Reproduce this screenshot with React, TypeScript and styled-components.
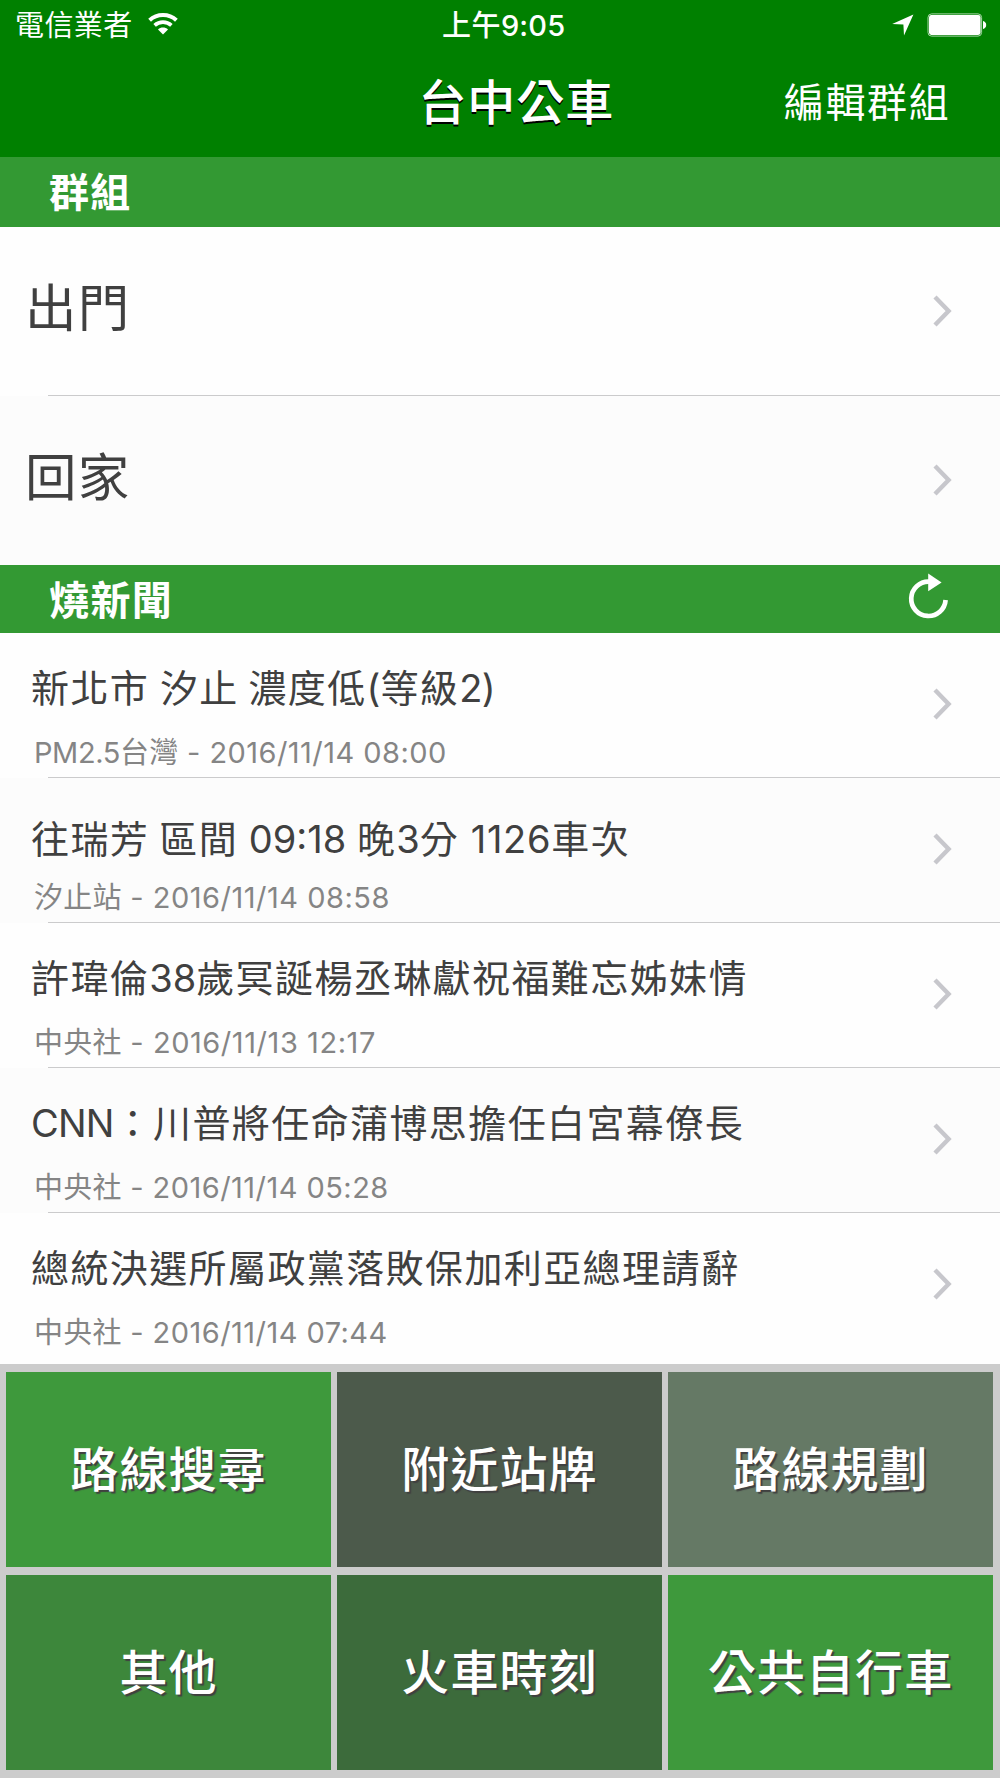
import React from "react";
import styled, { createGlobalStyle } from "styled-components";

const GlobalStyle = createGlobalStyle`
  body {
    margin: 0;
    background: #fff;
    font-family: Inter, "Noto Sans CJK TC", sans-serif;
  }
  * { box-sizing: border-box; }
`;

const Screen = styled.div`
  display: flex;
  flex-direction: column;
  width: 1000px;
  height: 1778px;
  overflow: hidden;
`;

const TopBar = styled.header`
  flex: none;
  height: 157px;
  background: #008000;
  color: #fff;
`;

const StatusBar = styled.div`
  display: grid;
  grid-template-columns: 1fr auto 1fr;
  align-items: center;
  height: 51px;
  padding: 0 13.5px 0 15px;
  font-size: 29px;
  line-height: 50px;
`;

const StatusLeft = styled.div`
  display: flex;
  align-items: center;
  gap: 15px;
  svg { margin-top: -3px; }
`;

const Clock = styled.div`
  padding-left: 6px;
  font-weight: 500;
`;

const StatusRight = styled.div`
  display: flex;
  align-items: center;
  justify-content: flex-end;
  gap: 13px;
  svg { margin-top: -1px; }
`;

const NavBar = styled.nav`
  display: grid;
  grid-template-columns: 1fr auto 1fr;
  align-items: center;
  height: 103px;
  padding: 0 49.5px 0 82px;
`;

const NavTitle = styled.h1`
  grid-column: 2;
  margin: 0;
  font-size: 48px;
  line-height: 60px;
  font-weight: 500;
  text-shadow: 0 2px 0 #000;
`;

const NavAction = styled.a`
  justify-self: end;
  font-size: 40px;
  line-height: 60px;
`;

const SectionHeader = styled.div<{ $height: number; $drop: number }>`
  flex: none;
  display: flex;
  align-items: center;
  justify-content: space-between;
  height: ${(p) => p.$height}px;
  padding: ${(p) => p.$drop}px 51px 0 49px;
  background: #339933;
  color: #fff;
  font-size: 40px;
  line-height: 64px;
  font-weight: 700;
  svg { margin-top: -8px; }
`;

const Row = styled.div<{ $alt?: boolean; $height: number; $line?: boolean }>`
  flex: none;
  display: flex;
  justify-content: space-between;
  height: ${(p) => p.$height}px;
  padding-right: 48.5px;
  background: ${(p) => (p.$alt ? "#fcfcfc" : "#fefefe")};
  background-image: ${(p) =>
    p.$line ? "linear-gradient(#cbcbcc, #cbcbcc)" : "none"};
  background-size: 952px 1px;
  background-position: right bottom;
  background-repeat: no-repeat;
`;

const Disclosure = styled.span<{ $height: number }>`
  display: flex;
  align-items: center;
  height: ${(p) => p.$height}px;
`;

const GroupName = styled.div`
  padding-left: 25px;
  font-size: 51.5px;
  line-height: 163px;
  color: #404040;
`;

const NewsText = styled.div<{ $low?: boolean }>`
  display: flex;
  flex-direction: column;
  padding-top: ${(p) => (p.$low ? 37 : 31)}px;
  gap: ${(p) => (p.$low ? 16 : 22)}px;
`;

const NewsTitle = styled.div`
  padding-left: 31px;
  font-size: 38px;
  line-height: 48px;
  color: #404040;
  white-space: pre;
`;

const NewsMeta = styled.div`
  padding-left: 34px;
  font-size: 29px;
  line-height: 38px;
  color: #858585;
  white-space: pre;
`;

const Run = styled.span<{ $tracking: number }>`
  letter-spacing: ${(p) => p.$tracking}px;
`;

const Tiles = styled.div`
  flex: 1;
  display: grid;
  grid-template-columns: repeat(3, 325px);
  grid-template-rows: repeat(2, 195px);
  gap: 8px 6px;
  padding: 8px 7px 8px 6px;
  background: #ccc;
`;

const Tile = styled.button<{ $color: string }>`
  border: 0;
  padding: 0;
  background: ${(p) => p.$color};
  color: #fff;
  font-family: inherit;
  font-size: 48px;
  line-height: 60px;
  font-weight: 500;
  text-shadow: 2px 2px 1px #404040;
`;

/* Splits a string into Latin and Han runs so each keeps its own tracking. */
function Label({ text, han = 0, latin = [] }: { text: string; han?: number; latin?: number[] }) {
  const runs = text.match(/[\x20-\x7e]+|[^\x20-\x7e]+/g) ?? [];
  let n = 0;
  return (
    <>
      {runs.map((run, i) => (
        <Run key={i} $tracking={run.charCodeAt(0) < 127 ? latin[n++] ?? 0 : han}>
          {run}
        </Run>
      ))}
    </>
  );
}

const Chevron = () => (
  <svg width="19" height="32" viewBox="0 0 19 32" fill="none">
    <path d="M2 2L15.6 16L2 30" stroke="#c7c7cc" strokeWidth="4.4" />
  </svg>
);

const Refresh = () => (
  <svg width="41" height="48" viewBox="0 0 41 48">
    <path d="M21 8.6A17.2 17.2 0 1 0 37.6 27" fill="none" stroke="#fff" strokeWidth="4.7" />
    <path d="M20.2 0.5L33.6 9.6L20.2 18.2Z" fill="#fff" />
  </svg>
);

const Wifi = () => (
  <svg width="30" height="22" viewBox="0 0 30 22" fill="none" stroke="#fff">
    <path d="M1.6 7.2C9 .3 21 .3 28.4 7.2" strokeWidth="4" />
    <path d="M6.6 12.3C11.4 8 18.6 8 23.4 12.3" strokeWidth="3.7" />
    <path d="M10 16.4C12.8 13.9 17.2 13.9 20 16.4L15 21.6Z" fill="#fff" stroke="none" />
  </svg>
);

const Location = () => (
  <svg width="22" height="22" viewBox="0 0 22 22">
    <path d="M21.4 .4L12 21.6L11.4 10.6L.2 10Z" fill="#fff" />
  </svg>
);

const Battery = () => (
  <svg width="60" height="24" viewBox="0 0 60 24">
    <rect x="1" y=".9" width="53.6" height="22.2" rx="3.6" fill="none" stroke="#a8d6a8" strokeWidth="1" />
    <rect x="2" y="2" width="51.6" height="20" rx="2.4" fill="#fff" />
    <path d="M56 8C58 8.4 59.2 10 59.2 12S58 15.6 56 16Z" fill="#fff" />
  </svg>
);

const groups = ["出門", "回家"];

const news = [
  {
    title: "新北市 汐止 濃度低(等級2)",
    tracking: [0, -1, 0, -0.8],
    meta: "PM2.5台灣 - 2016/11/14 08:00",
    metaTracking: [-0.4, 0.45],
  },
  {
    title: "往瑞芳 區間 09:18 晚3分 1126車次",
    tracking: [-0.6, 0, 0, 0.75],
    meta: "汐止站 - 2016/11/14 08:58",
    metaTracking: [0.5],
    low: true,
  },
  {
    title: "許瑋倫38歲冥誕楊丞琳獻祝福難忘姊妹情",
    tracking: [0],
    meta: "中央社 - 2016/11/13 12:17",
    metaTracking: [0.55],
  },
  {
    title: "CNN：川普將任命蒲博思擔任白宮幕僚長",
    tracking: [-0.8],
    meta: "中央社 - 2016/11/14 05:28",
    metaTracking: [0.45],
  },
  {
    title: "總統決選所屬政黨落敗保加利亞總理請辭",
    tracking: [],
    meta: "中央社 - 2016/11/14 07:44",
    metaTracking: [0.45],
  },
];

const tiles = [
  { label: "路線搜尋", color: "#3e993c" },
  { label: "附近站牌", color: "#4c5a4b" },
  { label: "路線規劃", color: "#657965" },
  { label: "其他", color: "#3d873b" },
  { label: "火車時刻", color: "#3c6b3b" },
  { label: "公共自行車", color: "#3e993c" },
];

export default function App() {
  return (
    <Screen>
      <GlobalStyle />
      <TopBar>
        <StatusBar>
          <StatusLeft>
            <Label text="電信業者" han={0.4} />
            <Wifi />
          </StatusLeft>
          <Clock>
            <Label text="上午9:05" han={0.4} latin={[0.2]} />
          </Clock>
          <StatusRight>
            <Location />
            <Battery />
          </StatusRight>
        </StatusBar>
        <NavBar>
          <NavTitle>
            <Label text="台中公車" han={0.9} />
          </NavTitle>
          <NavAction>
            <Label text="編輯群組" han={1.7} />
          </NavAction>
        </NavBar>
      </TopBar>
      <SectionHeader $height={70} $drop={2}>
        <Label text="群組" han={1.2} />
      </SectionHeader>
      {groups.map((name, i) => (
        <Row key={name} $height={169} $alt={i % 2 === 1} $line={i === 0}>
          <GroupName>
            <Label text={name} han={1.3} />
          </GroupName>
          <Disclosure $height={167}>
            <Chevron />
          </Disclosure>
        </Row>
      ))}
      <SectionHeader $height={68} $drop={4}>
        <div>
          <Label text="燒新聞" han={1.4} />
        </div>
        <Refresh />
      </SectionHeader>
      {news.map((item, i) => (
        <Row
          key={item.title}
          $height={i === news.length - 1 ? 151 : 145}
          $alt={i % 2 === 1}
          $line={i < news.length - 1}
        >
          <NewsText $low={item.low}>
            <NewsTitle>
              <Label text={item.title} han={1.4} latin={item.tracking} />
            </NewsTitle>
            <NewsMeta>
              <Label text={item.meta} han={0.2} latin={item.metaTracking} />
            </NewsMeta>
          </NewsText>
          <Disclosure $height={142}>
            <Chevron />
          </Disclosure>
        </Row>
      ))}
      <Tiles>
        {tiles.map((tile) => (
          <Tile key={tile.label} $color={tile.color}>
            <Label text={tile.label} han={1.1} />
          </Tile>
        ))}
      </Tiles>
    </Screen>
  );
}
